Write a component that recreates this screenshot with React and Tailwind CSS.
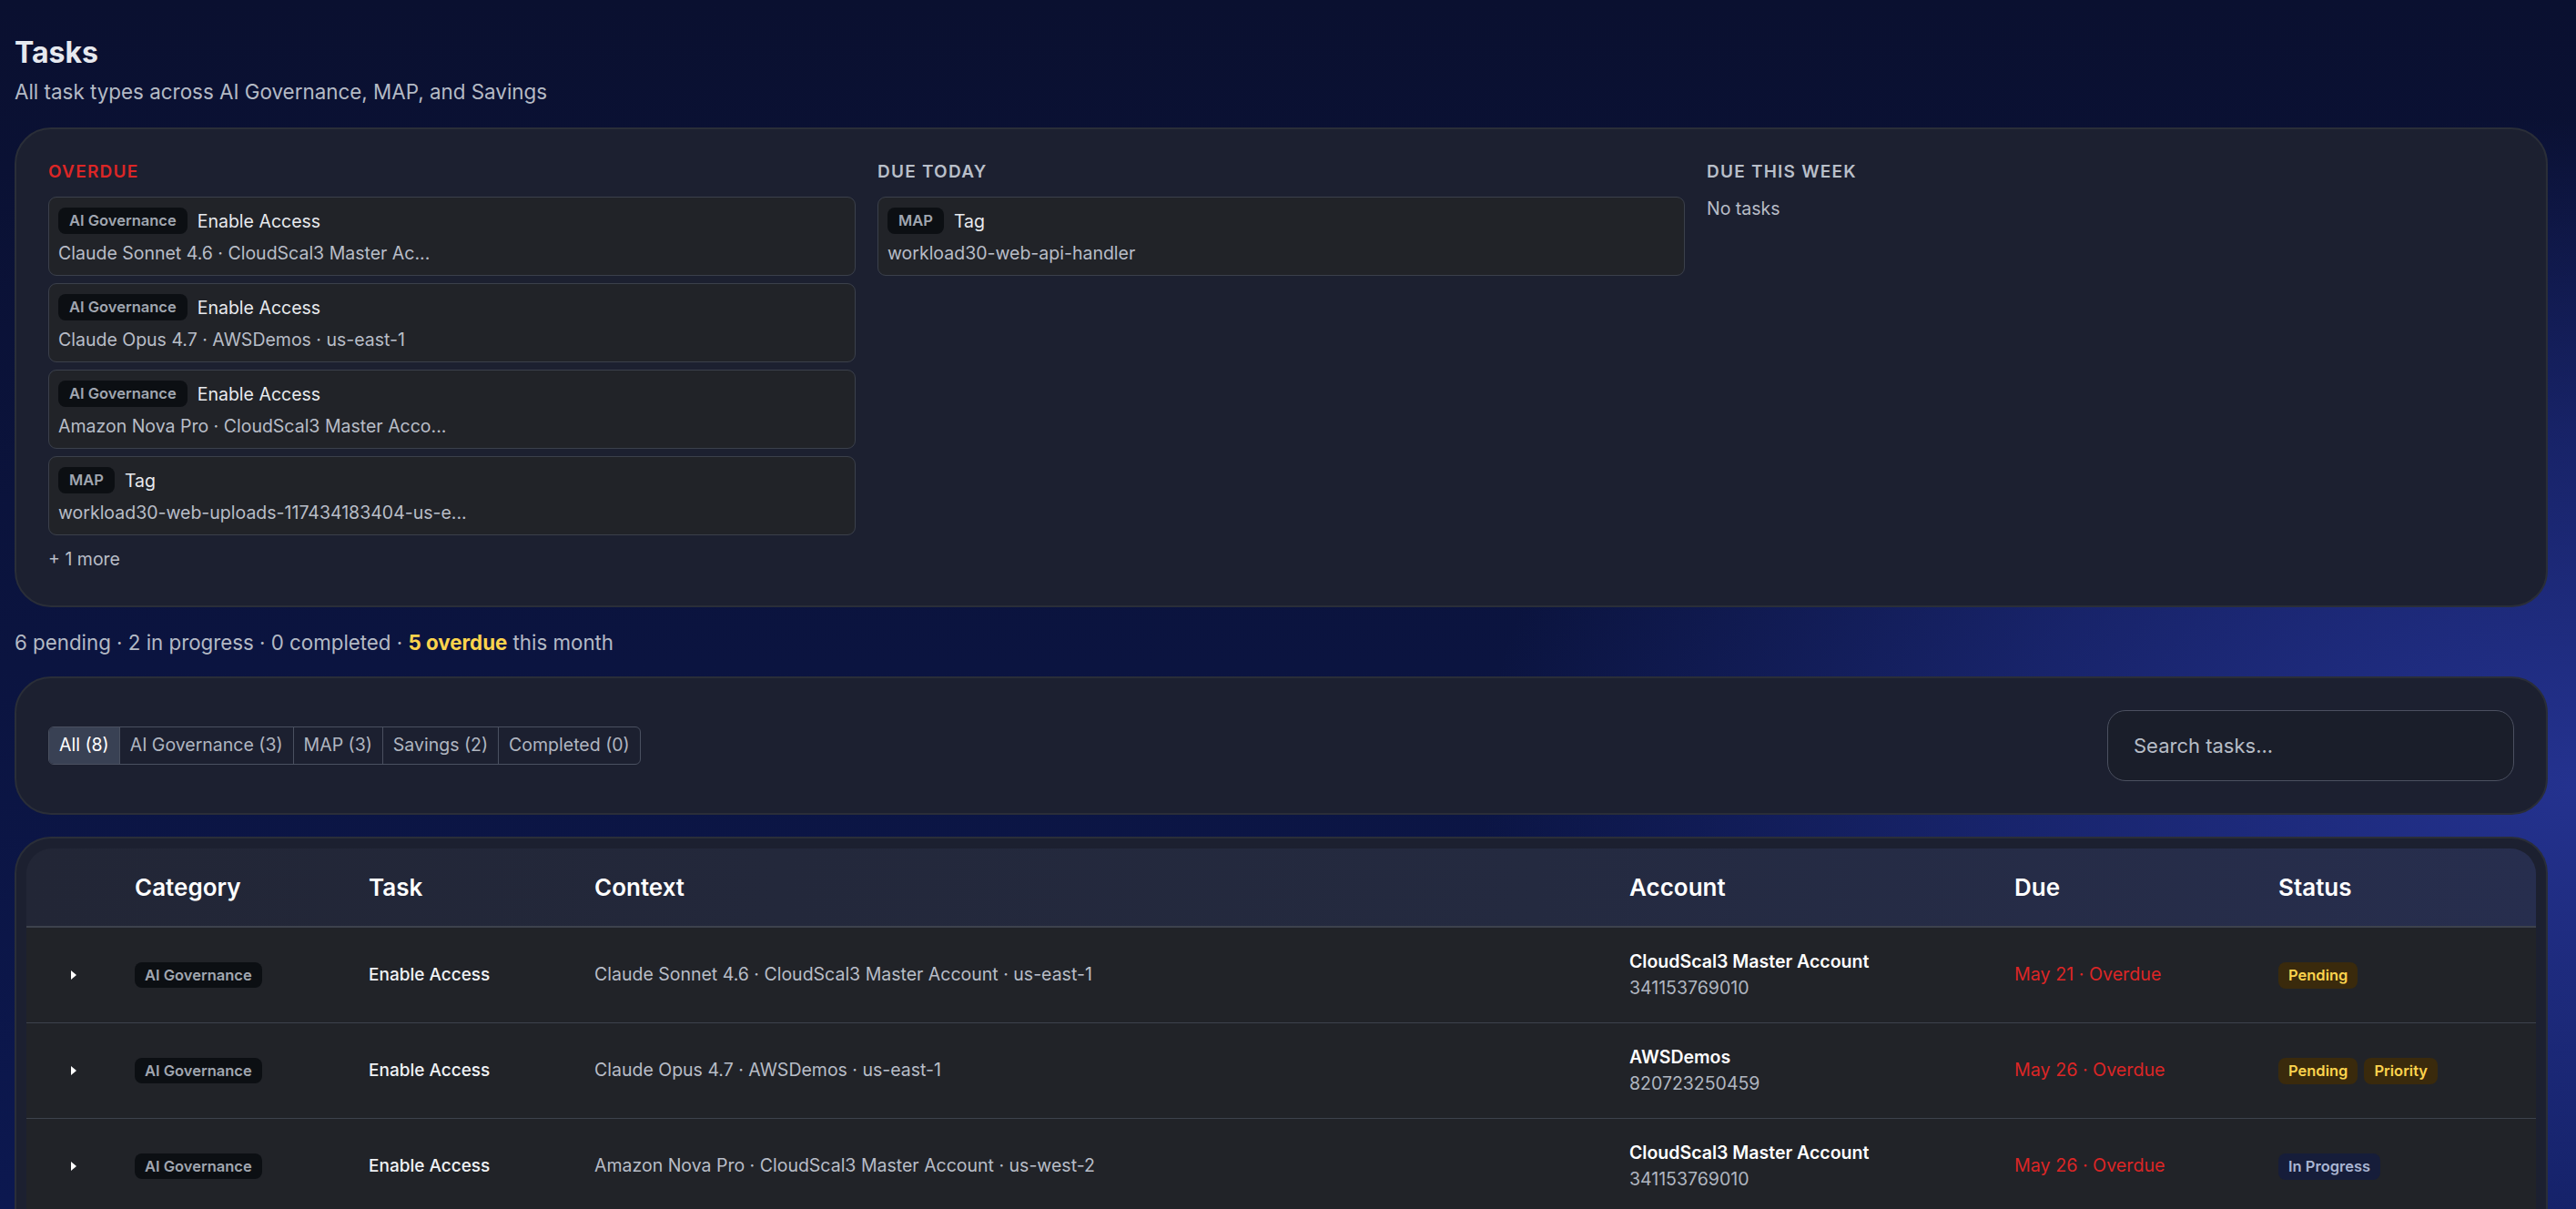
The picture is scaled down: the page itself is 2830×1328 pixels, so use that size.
import React from "react";

const overdue = [
  { cat: "AI Governance", title: "Enable Access", sub: "Claude Sonnet 4.6 · CloudScal3 Master Ac..." },
  { cat: "AI Governance", title: "Enable Access", sub: "Claude Opus 4.7 · AWSDemos · us-east-1" },
  { cat: "AI Governance", title: "Enable Access", sub: "Amazon Nova Pro · CloudScal3 Master Acco..." },
  { cat: "MAP", title: "Tag", sub: "workload30-web-uploads-117434183404-us-e..." },
];

const rows = [
  {
    cat: "AI Governance",
    task: "Enable Access",
    ctx: "Claude Sonnet 4.6 · CloudScal3 Master Account · us-east-1",
    acct: "CloudScal3 Master Account",
    id: "341153769010",
    due: "May 21 · Overdue",
    status: ["Pending"],
  },
  {
    cat: "AI Governance",
    task: "Enable Access",
    ctx: "Claude Opus 4.7 · AWSDemos · us-east-1",
    acct: "AWSDemos",
    id: "820723250459",
    due: "May 26 · Overdue",
    status: ["Pending", "Priority"],
  },
  {
    cat: "AI Governance",
    task: "Enable Access",
    ctx: "Amazon Nova Pro · CloudScal3 Master Account · us-west-2",
    acct: "CloudScal3 Master Account",
    id: "341153769010",
    due: "May 26 · Overdue",
    status: ["In Progress"],
  },
];

function Badge({ children }) {
  return (
    <span className="inline-flex h-[29px] items-center rounded-[8px] bg-[#0c0f13] px-[12px] text-[16.5px] font-semibold text-[#a0a6b0]">
      {children}
    </span>
  );
}

function StatusBadge({ s }) {
  if (s === "In Progress") {
    return (
      <span className="inline-flex h-[29px] items-center rounded-[8px] bg-[#161d3a] px-[11px] text-[16.5px] font-semibold text-[#aab5d2]">
        {s}
      </span>
    );
  }
  return (
    <span className="inline-flex h-[29px] items-center rounded-[8px] bg-[#3a2a0c] px-[11px] text-[16.5px] font-semibold text-[#fcd34d]">
      {s}
    </span>
  );
}

function Item({ it }) {
  return (
    <div className="rounded-[9px] border border-[#3b404b] bg-[#212328] px-[10px] py-[11px]">
      <div className="flex items-center gap-[11px]">
        <Badge>{it.cat}</Badge>
        <span className="text-[19.5px] leading-[26px] text-[#e8eaee]">{it.title}</span>
      </div>
      <div className="mt-[8px] truncate text-[19.5px] leading-[26px] text-[#b8bdc7]">{it.sub}</div>
    </div>
  );
}

function Chevron() {
  return (
    <svg width="8" height="12" viewBox="0 0 8 12" className="block">
      <polygon points="1,1 7,6 1,11" fill="#ffffff" />
    </svg>
  );
}

export default function App() {
  const tabs = ["All (8)", "AI Governance (3)", "MAP (3)", "Savings (2)", "Completed (0)"];
  return (
    <div className="h-[1328px] overflow-hidden bg-[radial-gradient(ellipse_50%_65%_at_100%_65%,#24328f_0%,rgba(34,48,140,0.55)_45%,transparent_85%),linear-gradient(180deg,#0a1030_0%,#0b1440_55%,#0c1850_100%)] pl-4 pr-[31px] pt-[37px] font-['Inter',sans-serif]">
      <h1 className="text-[32px] font-bold leading-[41px] text-[#e6e9ef]">Tasks</h1>
      <p className="mt-[9px] text-[22.4px] leading-[28px] text-[#b4bac5]">
        All task types across AI Governance, MAP, and Savings
      </p>

      <section className="mt-[25px] rounded-[40px] border-2 border-[#2a2e38] bg-[#1c2030] px-[35px] pb-[38px] pt-[35px]">
        <div className="grid grid-cols-3 gap-x-[24px]">
          <div>
            <div className="mb-[15px] text-[19px] font-semibold uppercase leading-[24px] tracking-[0.065em] text-[#dc2626]">
              Overdue
            </div>
            <div className="flex flex-col gap-[8px]">
              {overdue.map((it, i) => (
                <Item key={i} it={it} />
              ))}
            </div>
            <div className="mt-[13px] text-[19.5px] leading-[26px] text-[#b8bdc7]">+ 1 more</div>
          </div>
          <div>
            <div className="mb-[15px] text-[19px] font-semibold uppercase leading-[24px] tracking-[0.065em] text-[#b9bfc9]">
              Due Today
            </div>
            <Item it={{ cat: "MAP", title: "Tag", sub: "workload30-web-api-handler" }} />
          </div>
          <div>
            <div className="mb-[15px] text-[19px] font-semibold uppercase leading-[24px] tracking-[0.065em] text-[#b9bfc9]">
              Due This Week
            </div>
            <div className="text-[19.5px] leading-[26px] text-[#b8bdc7]">No tasks</div>
          </div>
        </div>
      </section>

      <p className="mt-[25px] text-[22.3px] leading-[28px] text-[#b4bac5]">
        6 pending · 2 in progress · 0 completed · <span className="font-bold text-[#fcd34d]">5 overdue</span> this month
      </p>

      <section className="mt-[23px] flex items-center justify-between rounded-[40px] border-2 border-[#2a2e38] bg-[#1c2030] p-[35px]">
        <div className="flex overflow-hidden rounded-[6px] border border-[#4a5060]">
          {tabs.map((t, i) => (
            <button
              key={t}
              className={
                "h-[40px] px-[11px] text-[19.5px] " +
                (i === 0 ? "bg-[#394154] text-white" : "border-l border-[#4a5060] text-[#b0b6c0]")
              }
            >
              {t}
            </button>
          ))}
        </div>
        <input
          placeholder="Search tasks..."
          className="h-[78px] w-[447px] rounded-[20px] border border-[#4b5060] bg-[#1a1e2a] pl-[28px] text-[22px] text-white outline-none placeholder:text-[#b6bcc6]"
        />
      </section>

      <section className="mt-[24px] rounded-t-[40px] border-2 border-b-0 border-[#2a2e38] bg-[#1c2030] px-[11px] pt-[11px]">
        <div className="overflow-hidden rounded-t-[28px]">
          <table className="w-full table-fixed border-collapse">
            <colgroup>
              <col className="w-[119px]" />
              <col className="w-[257px]" />
              <col className="w-[248px]" />
              <col className="w-[1137px]" />
              <col className="w-[423px]" />
              <col className="w-[290px]" />
              <col />
            </colgroup>
            <thead>
              <tr className="bg-[linear-gradient(90deg,#222636_0%,#242a40_60%,#272e4e_100%)]">
                <th className="h-[86px] border-b-2 border-[#3d424d]"></th>
                {["Category", "Task", "Context", "Account", "Due", "Status"].map((h) => (
                  <th
                    key={h}
                    className="h-[86px] border-b-2 border-[#3d424d] text-left text-[26px] font-semibold text-white"
                  >
                    {h}
                  </th>
                ))}
              </tr>
            </thead>
            <tbody>
              {rows.map((r, i) => (
                <tr key={i} className="border-b border-[#3d424d] bg-[#212328]">
                  <td className="py-[23px] pl-[48px] align-middle">
                    <Chevron />
                  </td>
                  <td className="py-[23px] align-middle">
                    <span className="inline-flex h-[28px] items-center rounded-[8px] bg-[#0c0f13] px-[11px] text-[16.5px] font-semibold text-[#a0a6b0]">
                      {r.cat}
                    </span>
                  </td>
                  <td className="py-[23px] align-middle text-[19px] font-medium text-[#f0f2f5]">{r.task}</td>
                  <td className="py-[23px] align-middle text-[19.5px] text-[#b8bdc7]">{r.ctx}</td>
                  <td className="py-[23px] align-middle">
                    <div className="text-[19.5px] font-semibold leading-[29px] text-white">{r.acct}</div>
                    <div className="text-[19.5px] leading-[29px] text-[#b0b6c0]">{r.id}</div>
                  </td>
                  <td className="py-[23px] align-middle text-[19.7px] text-[#dc2626]">{r.due}</td>
                  <td className="py-[23px] align-middle">
                    <div className="flex gap-[7px]">
                      {r.status.map((s) => (
                        <StatusBadge key={s} s={s} />
                      ))}
                    </div>
                  </td>
                </tr>
              ))}
            </tbody>
          </table>
        </div>
      </section>
    </div>
  );
}
